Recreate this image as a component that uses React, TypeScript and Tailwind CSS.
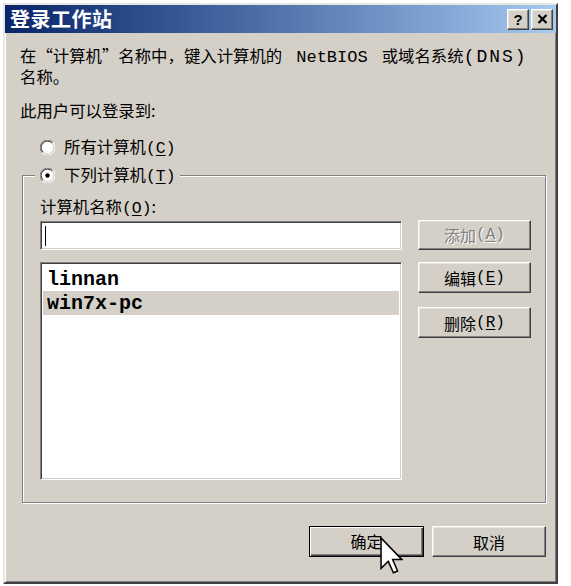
import React from "react";

const raised =
  "border border-t-white border-l-white border-r-[#404040] border-b-[#404040] shadow-[inset_-1px_-1px_0_#808080,inset_1px_1px_0_#e4e2dc]";
const sunken =
  "border border-t-[#808080] border-l-[#808080] border-r-white border-b-white shadow-[inset_1px_1px_0_#404040,inset_-1px_-1px_0_#d4d0c8]";

function Radio({ checked }: { checked?: boolean }) {
  return (
    <svg width="15" height="15" viewBox="0 0 15 15" className="shrink-0">
      <circle cx="7.5" cy="7.5" r="6" fill="#fff" />
      <path d="M2.2 12.8 A7 7 0 0 1 12.8 2.2" fill="none" stroke="#808080" strokeWidth="1" />
      <path d="M12.8 2.2 A7 7 0 0 1 2.2 12.8" fill="none" stroke="#fff" strokeWidth="1" />
      <path d="M3 12 A6 6 0 0 1 12 3" fill="none" stroke="#404040" strokeWidth="1" />
      <path d="M12 3 A6 6 0 0 1 3 12" fill="none" stroke="#d4d0c8" strokeWidth="1" />
      {checked && <circle cx="7.5" cy="7.5" r="2.2" fill="#000" />}
    </svg>
  );
}

function Key({ k }: { k: string }) {
  return (
    <span className="font-['Liberation_Mono',monospace]">
      (<span className="underline underline-offset-2">{k}</span>)
    </span>
  );
}

function Btn({
  children,
  disabled,
  className = "",
}: {
  children: React.ReactNode;
  disabled?: boolean;
  className?: string;
}) {
  return (
    <div
      className={`${raised} bg-[#d4d0c8] flex items-center justify-center text-[16px] leading-none ${
        disabled ? "text-[#808080] [text-shadow:1px_1px_0_#fff]" : "text-black"
      } ${className}`}
    >
      {children}
    </div>
  );
}

export default function App() {
  return (
    <div className="w-[571px] h-[586px] bg-white pt-[3px] pl-[3px] relative font-['Noto_Sans_CJK_SC',sans-serif] text-black">
      <div className="w-[555px] h-[581px] bg-[#d4d0c8] border-2 border-t-[#e8e6e1] border-l-[#e8e6e1] border-r-[#404040] border-b-[#404040] shadow-[inset_1px_1px_0_#fff,inset_-1px_-1px_0_#808080] flex flex-col">
        {/* title bar */}
        <div className="h-[28px] flex items-center justify-between bg-linear-to-r from-[#0a246a] to-[#a6caf0] pl-[5px] pr-[3px]">
          <span className="text-white font-bold text-[20px] leading-[28px] tracking-[0.5px]">登录工作站</span>
          <div className="flex gap-[2px]">
            <div className={`${raised} w-[22px] h-[21px] bg-[#d4d0c8] flex items-center justify-center`}>
              <span className="font-['Liberation_Sans',sans-serif] font-bold text-[15px] leading-none">?</span>
            </div>
            <div className={`${raised} w-[22px] h-[21px] bg-[#d4d0c8] flex items-center justify-center`}>
              <svg width="11" height="10" viewBox="0 0 11 10">
                <path d="M1.5 1 L9.5 9 M9.5 1 L1.5 9" stroke="#000" strokeWidth="2.2" />
              </svg>
            </div>
          </div>
        </div>

        {/* body */}
        <div className="flex-1 flex flex-col pl-[15px] pr-[10px] text-[16.4px] leading-[19px]">
          <p className="mt-[13px]">
            在“计算机”名称中，键入计算机的
            <span className="font-['Liberation_Mono',monospace] text-[17px] px-[14px]">NetBIOS</span>或域名系统
            <span className="font-['Liberation_Mono',monospace] text-[18px] tracking-[2px]">(DNS)</span>
            <br />
            名称。
          </p>

          <div className="mt-[15px]">此用户可以登录到:</div>

          <div className="mt-[18px] ml-[20px] h-[19px] flex items-center gap-[9px]">
            <Radio />
            <span>
              所有计算机<Key k="C" />
            </span>
          </div>

          <fieldset className="mt-[8px] ml-[2px] w-[524px] border border-[#808080] shadow-[1px_1px_0_#fff,inset_1px_1px_0_#fff]">
            <legend className="ml-[12px] px-[5px] h-[20px] bg-[#d4d0c8] flex items-center gap-[9px] leading-[19px]">
              <Radio checked />
              <span>
                下列计算机<Key k="T" />
              </span>
            </legend>

            <div className="pl-[17px] pr-[14px] pb-[22px]">
              <div className="mt-[12px]">
                计算机名称<Key k="O" />:
              </div>

              <div className="mt-[2px] flex gap-[16px]">
                <div className={`${sunken} mt-[1px] w-[362px] h-[29px] bg-white flex items-center`}>
                  <span className="ml-[4px] w-[1px] h-[20px] bg-black" />
                </div>
                <Btn disabled className="w-[113px] h-[30px]">
                  添加<Key k="A" />
                </Btn>
              </div>

              <div className="mt-[12px] flex gap-[16px]">
                <div className={`${sunken} w-[362px] h-[218px] bg-white pt-[4px] px-[2px] font-['Liberation_Mono',monospace] font-bold text-[20px]`}>
                  <div className="h-[24px] pl-[4px] flex items-center">linnan</div>
                  <div className="h-[24px] pl-[4px] flex items-center bg-[#d4d0c8]">win7x-pc</div>
                </div>
                <div className="flex flex-col">
                  <Btn className="w-[113px] h-[31px]">
                    编辑<Key k="E" />
                  </Btn>
                  <Btn className="mt-[14px] w-[113px] h-[31px]">
                    删除<Key k="R" />
                  </Btn>
                </div>
              </div>
            </div>
          </fieldset>

          <div className="mt-[23px] flex justify-end gap-[8px]">
            <div className="w-[115px] h-[31px] border border-black shadow-[inset_1px_1px_0_#fff,inset_-1px_-1px_0_#404040,inset_-2px_-2px_0_#808080] bg-[#d4d0c8] flex items-center justify-center text-[16px]">
              确定
            </div>
            <Btn className="w-[114px] h-[31px]">取消</Btn>
          </div>
        </div>
      </div>

      {/* mouse pointer */}
      <svg
        className="absolute left-[380px] top-[537px]"
        width="23"
        height="38"
        viewBox="0 0 12 20"
      >
        <path
          d="M0.5 0.5 L0.5 16.5 L4.3 12.8 L7 18.8 L9.2 17.9 L6.6 11.9 L11.5 11.9 Z"
          fill="#fff"
          stroke="#000"
          strokeWidth="0.8"
          strokeLinejoin="miter"
        />
      </svg>
    </div>
  );
}
